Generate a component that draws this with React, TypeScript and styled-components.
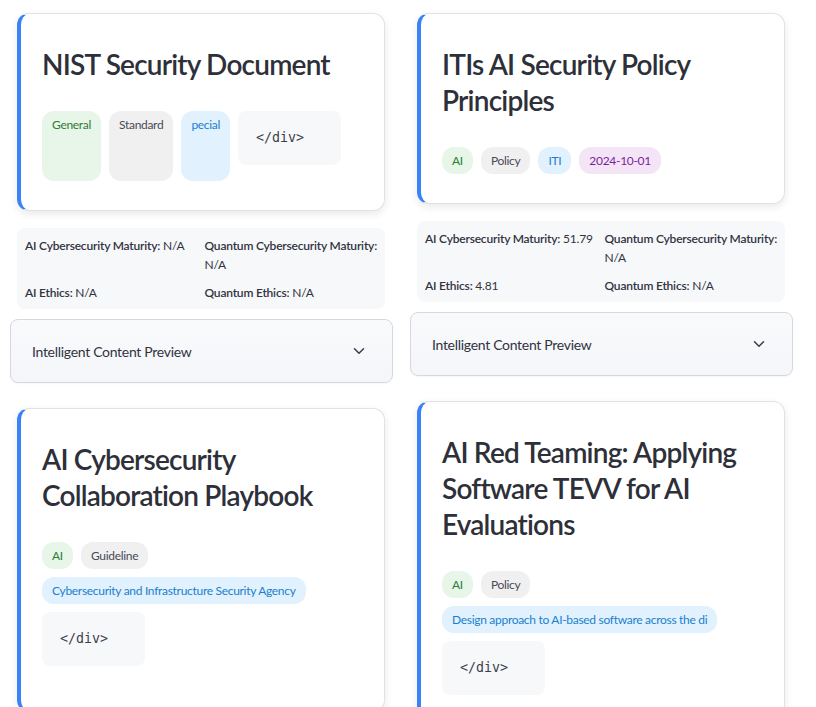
import React from "react";
import styled, { createGlobalStyle } from "styled-components";
import { ChevronDown } from "lucide-react";

const GlobalStyle = createGlobalStyle`
  html, body { margin: 0; padding: 0; background: #ffffff; }
  body { font-family: Lato, "Noto Sans", sans-serif; color: #31333f; }
  * { box-sizing: border-box; }
`;

const Page = styled.div`
  display: grid;
  grid-template-columns: 383px 383px;
  column-gap: 17px;
  padding: 13px 10px 0 10px;
  align-items: start;
`;

const Column = styled.div`
  display: flex;
  flex-direction: column;
`;

const Card = styled.div`
  margin: 0 8px 17px 7px;
  background: #ffffff;
  border: 1px solid #e2e2e2;
  border-left: 4px solid #3b82f6;
  border-radius: 12px;
  box-shadow: 0 3px 8px rgba(0, 0, 0, 0.09);
  padding: 32px 20px 29px 21px;
`;

const Title = styled.h3`
  margin: 0 0 29px 0;
  font-size: 28px;
  line-height: 36px;
  font-weight: 600;
  letter-spacing: -0.8px;
  color: #2e3039;
`;

const Tags = styled.div`
  display: flex;
  flex-wrap: wrap;
  gap: 8px;
  align-items: stretch;
`;

const tones = {
  green: { bg: "#e8f5e9", fg: "#2e7d32" },
  gray: { bg: "#f0f0f0", fg: "#474a57" },
  blue: { bg: "#e1f1fd", fg: "#1a7fd0" },
  purple: { bg: "#f3e5f5", fg: "#7b1fa2" },
};

type Tone = keyof typeof tones;

const Pill = styled.span<{ $tone: Tone }>`
  display: block;
  padding: 5px 10px;
  border-radius: 12px;
  font-size: 12px;
  line-height: 17px;
  letter-spacing: -0.3px;
  background: ${(p) => tones[p.$tone].bg};
  color: ${(p) => tones[p.$tone].fg};
  white-space: nowrap;
`;

const CodeBlock = styled.pre`
  margin: 0 0 16px 0;
  width: 103px;
  padding: 16px 16px 16px 18px;
  background: #f7f8fa;
  border-radius: 8px;
  font-family: "DejaVu Sans Mono", "Liberation Mono", monospace;
  font-size: 13.3px;
  line-height: 22px;
  color: #3d3f4a;
`;

const Metrics = styled.div`
  margin: 0 8px 10px 7px;
  background: #f7f8fa;
  border-radius: 8px;
  padding: 8px 8px 7px 8px;
  display: grid;
  grid-template-columns: 1fr 1fr;
  column-gap: 10px;
  row-gap: 9px;
  font-size: 12px;
  line-height: 19px;
  letter-spacing: -0.2px;
  color: #31333f;
`;

const Metric = styled.div`
  b {
    font-weight: 600;
    white-space: nowrap;
  }
`;

const Expander = styled.div`
  margin-bottom: 25px;
  height: 64px;
  display: flex;
  align-items: center;
  justify-content: space-between;
  padding: 0 24px 0 21px;
  border: 1px solid #d6d8dc;
  border-radius: 8px;
  background: linear-gradient(180deg, #f9fafc 0%, #f4f6f9 100%);
  box-shadow: 0 1px 2px rgba(0, 0, 0, 0.04);
  font-size: 14px;
  letter-spacing: -0.3px;
  color: #31333f;
`;

type Tag = { text: string; tone: Tone };
type Doc = {
  title: string;
  tags: Tag[];
  code?: boolean;
  metrics?: { aiMat: string; qMat: string; aiEth: string; qEth: string };
};

const DocCard = ({ doc }: { doc: Doc }) => (
  <>
    <Card>
      <Title>{doc.title}</Title>
      <Tags>
        {doc.tags.map((t) => (
          <Pill key={t.text} $tone={t.tone}>
            {t.text}
          </Pill>
        ))}
        {doc.code && <CodeBlock>{"</div>"}</CodeBlock>}
      </Tags>
    </Card>
    {doc.metrics && (
      <>
        <Metrics>
          <Metric>
            <b>AI Cybersecurity Maturity:</b> {doc.metrics.aiMat}
          </Metric>
          <Metric>
            <b>Quantum Cybersecurity Maturity:</b> {doc.metrics.qMat}
          </Metric>
          <Metric>
            <b>AI Ethics:</b> {doc.metrics.aiEth}
          </Metric>
          <Metric>
            <b>Quantum Ethics:</b> {doc.metrics.qEth}
          </Metric>
        </Metrics>
        <Expander>
          <span>Intelligent Content Preview</span>
          <ChevronDown size={18} strokeWidth={2} color="#3a3d4a" />
        </Expander>
      </>
    )}
  </>
);

const left: Doc[] = [
  {
    title: "NIST Security Document",
    tags: [
      { text: "General", tone: "green" },
      { text: "Standard", tone: "gray" },
      { text: "pecial", tone: "blue" },
    ],
    code: true,
    metrics: { aiMat: "N/A", qMat: "N/A", aiEth: "N/A", qEth: "N/A" },
  },
  {
    title: "AI Cybersecurity Collaboration Playbook",
    tags: [
      { text: "AI", tone: "green" },
      { text: "Guideline", tone: "gray" },
      { text: "Cybersecurity and Infrastructure Security Agency", tone: "blue" },
    ],
    code: true,
  },
];

const right: Doc[] = [
  {
    title: "ITIs AI Security Policy Principles",
    tags: [
      { text: "AI", tone: "green" },
      { text: "Policy", tone: "gray" },
      { text: "ITI", tone: "blue" },
      { text: "2024-10-01", tone: "purple" },
    ],
    metrics: { aiMat: "51.79", qMat: "N/A", aiEth: "4.81", qEth: "N/A" },
  },
  {
    title: "AI Red Teaming: Applying Software TEVV for AI Evaluations",
    tags: [
      { text: "AI", tone: "green" },
      { text: "Policy", tone: "gray" },
      { text: "Design approach to AI-based software across the di", tone: "blue" },
    ],
    code: true,
  },
];

export default function App() {
  return (
    <>
      <GlobalStyle />
      <Page>
        <Column>
          {left.map((d) => (
            <DocCard key={d.title} doc={d} />
          ))}
        </Column>
        <Column>
          {right.map((d) => (
            <DocCard key={d.title} doc={d} />
          ))}
        </Column>
      </Page>
    </>
  );
}
